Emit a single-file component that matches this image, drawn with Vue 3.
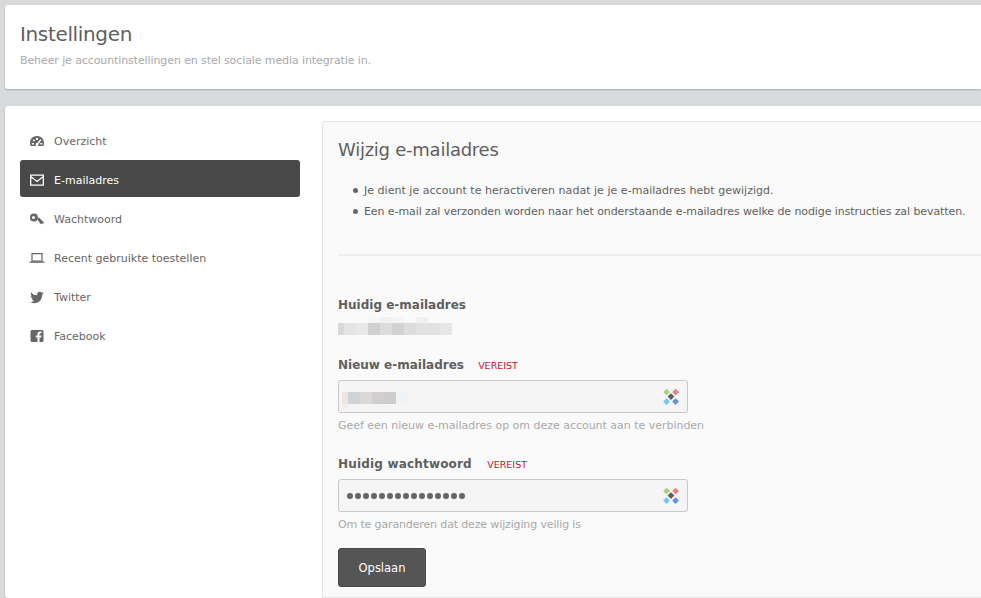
<template>
  <div class="page">
    <header class="card head">
      <h1>Instellingen</h1>
      <p>Beheer je accountinstellingen en stel sociale media integratie in.</p>
    </header>

    <section class="card body">
      <nav class="side">
        <a v-for="item in menu" :key="item.label" class="side-item" :class="{ active: item.active }">
          <svg class="side-icon" viewBox="0 0 16 16" width="16" height="16" v-html="item.icon"></svg>
          <span>{{ item.label }}</span>
        </a>
      </nav>

      <main class="panel">
        <h2>Wijzig e-mailadres</h2>
        <ul class="notes">
          <li>Je dient je account te heractiveren nadat je je e-mailadres hebt gewijzigd.</li>
          <li>Een e-mail zal verzonden worden naar het onderstaande e-mailadres welke de nodige instructies zal bevatten.</li>
        </ul>
        <hr />

        <div class="field first">
          <label>Huidig e-mailadres</label>
          <div class="pixels current">
            <div v-for="(row, r) in currentMail" :key="r" class="pixel-row" :class="{ thin: r === 0 }">
              <i v-for="(c, i) in row" :key="i" :style="{ background: c }"></i>
            </div>
          </div>
        </div>

        <div class="field">
          <label>Nieuw e-mailadres <em>VEREIST</em></label>
          <div class="input">
            <div class="pixels typed">
              <div v-for="(row, r) in newMail" :key="r" class="pixel-row" :class="{ thin: r === 1 }">
                <i v-for="(c, i) in row" :key="i" :style="{ background: c }"></i>
              </div>
            </div>
            <svg class="badge" viewBox="0 0 18 18" width="18" height="18">
              <path d="M4.600 .700l3.400 3.400-3.400 3.400-3.400-3.400z" fill="#a9d17f" />
              <path d="M13.600 .700l3.400 3.400-3.400 3.400-3.400-3.400z" fill="#e98181" />
              <path d="M4.600 10.200l3.400 3.400-3.400 3.400-3.400-3.400z" fill="#70c9ef" />
              <path d="M13.600 10.200l3.400 3.400-3.400 3.400-3.400-3.400z" fill="#6292d8" />
              <path d="M9 5.200l3.400 3.400-3.400 3.400-3.400-3.400z" fill="#5f5f5f" />
            </svg>
          </div>
          <small>Geef een nieuw e-mailadres op om deze account aan te verbinden</small>
        </div>

        <div class="field">
          <label class="wide">Huidig wachtwoord <em>VEREIST</em></label>
          <div class="input">
            <span class="dots">
              <b v-for="n in 15" :key="n"></b>
            </span>
            <svg class="badge" viewBox="0 0 18 18" width="18" height="18">
              <path d="M4.600 .700l3.400 3.400-3.400 3.400-3.400-3.400z" fill="#a9d17f" />
              <path d="M13.600 .700l3.400 3.400-3.400 3.400-3.400-3.400z" fill="#e98181" />
              <path d="M4.600 10.200l3.400 3.400-3.400 3.400-3.400-3.400z" fill="#70c9ef" />
              <path d="M13.600 10.200l3.400 3.400-3.400 3.400-3.400-3.400z" fill="#6292d8" />
              <path d="M9 5.200l3.400 3.400-3.400 3.400-3.400-3.400z" fill="#5f5f5f" />
            </svg>
          </div>
          <small class="tight">Om te garanderen dat deze wijziging veilig is</small>
        </div>

        <button class="save">Opslaan</button>
      </main>
    </section>
  </div>
</template>

<script setup>
const menu = [
  {
    label: 'Overzicht',
    icon: '<path fill="currentColor" fill-rule="evenodd" d="M8 3C3.800 3 1 6.200 1 10c0 1.200.3 2.200.7 3h12.600c.4-.8.7-1.800.7-3 0-3.800-2.800-7-7-7zM7 5h2v2H7zM3.700 7.200l1.400-1 1 1.300-1.400 1zM11.300 6.200l1.200.9-3 3.900a1.500 1.500 0 1 1-1.200-.9zM2.800 10h2v1.500h-2zM11.300 10h2v1.500h-2z"/>'
  },
  {
    label: 'E-mailadres',
    active: true,
    icon: '<path fill="none" stroke="currentColor" stroke-width="1.300" d="M1.700 3.200h12.600v10H1.700zM1.700 4.500L8 9.500l6.300-5"/>'
  },
  {
    label: 'Wachtwoord',
    icon: '<path fill="currentColor" fill-rule="evenodd" d="M5 2.500a4 4 0 1 1-.1 8 4 4 0 0 1 .1-8zM4.500 5a1.500 1.500 0 1 0 0 3 1.500 1.500 0 0 0 0-3zM8 8l2-1.500 5 5-1 1.500-1-.7-1 1-1-1-.7-1z"/>'
  },
  {
    label: 'Recent gebruikte toestellen',
    icon: '<path fill="none" stroke="currentColor" stroke-width="1.200" d="M3 3.600h10v7.600H3z"/><path fill="currentColor" d="M.5 11.500h15v1.300H.5z"/>'
  },
  {
    label: 'Twitter',
    icon: '<path fill="currentColor" d="M15 4c-.5.3-1 .4-1.600.5.600-.3 1-.8 1.200-1.500-.5.3-1.100.5-1.700.7a2.800 2.800 0 0 0-4.800 2.500C5.800 6.600 3.700 5.500 2.200 3.600c-.8 1.300-.4 3 .9 3.800-.5 0-.9-.1-1.300-.3 0 1.300 1 2.500 2.300 2.800-.4.100-.9.100-1.300 0 .4 1.100 1.400 1.900 2.600 1.900-1.100.9-2.600 1.300-4.100 1.100 4.800 3 11.900.6 11.900-7.300.6-.4 1.200-1 1.800-1.600z"/>'
  },
  {
    label: 'Facebook',
    icon: '<path fill="currentColor" d="M3 2h10a1.500 1.500 0 0 1 1.500 1.500v9A1.500 1.500 0 0 1 13 14h-2.500V9.500h1.700l.3-2h-2V6.300c0-.6.2-1 1-1h1.100V3.500h-1.500c-1.700 0-2.600 1-2.600 2.600v1.400H6.800v2h1.700V14H3a1.500 1.500 0 0 1-1.500-1.500v-9A1.500 1.500 0 0 1 3 2z"/>'
  }
]

// pixelated stand-ins for the hidden addresses, 6px cells
const f = '#fafafa'
const currentMail = [
  [f, f, f, f, f, '#f4f6f8', '#f4f6f8', '#f1f1f1', '#f1f1f1', '#f4f4f4', '#f4f4f4', f, f, '#f1f1f1', '#f1f1f1'],
  ['#d8d8d8', '#e4e4e4', '#e4e4e4', '#e8e8e8', '#e8e8e8', '#d0d0d2', '#d0d0d2', '#dcdcdc', '#dcdcdc', '#d2d2d2', '#d2d2d2', '#dcdcdc', '#dcdcdc', '#e2e2e2', '#e2e2e2', '#e2e2e2', '#e2e2e2', '#e6e6e6', '#e6e6e6']
]
const newMail = [
  ['#eee6e2', '#ced3d7', '#ced3d7', '#dad8d6', '#dad8d6', '#d0cece', '#d0cece', '#cecccc', '#cecccc', '#eff3f5', '#eff3f5'],
  ['#f3eeeb', '#f3f5f7', '#f3f5f7']
]
</script>

<style scoped>
.page {
  width: 981px;
  height: 598px;
  overflow: hidden;
  background: #d9dadc;
  padding: 5px 0 0 5px;
  box-sizing: border-box;
  font-family: "DejaVu Sans", sans-serif;
  color: #5f5f5f;
}
.card {
  background: #fff;
  border-radius: 3px 0 0 3px;
  box-shadow: 0 1px 2px rgba(0, 0, 0, 0.2);
}
.head {
  height: 84px;
  padding: 16px 15px 0;
  box-sizing: border-box;
}
h1 {
  margin: 0;
  font-size: 20px;
  font-weight: 400;
  line-height: 27px;
  letter-spacing: -0.35px;
}
.head p {
  margin: 5px 0 0;
  font-size: 11px;
  line-height: 16px;
  letter-spacing: -0.1px;
  color: #a9a9ad;
}
.body {
  margin-top: 17px;
  height: 492px;
  display: flex;
  padding: 15px 0 0 15px;
  box-sizing: border-box;
}
.side {
  width: 280px;
  flex: none;
  margin-right: 22px;
  display: flex;
  flex-direction: column;
  gap: 2px;
}
.side-item {
  display: flex;
  align-items: center;
  height: 37px;
  padding: 3px 0 0 9px;
  box-sizing: border-box;
  font-size: 11px;
  color: #666;
  border-radius: 3px;
}
.side-item.active {
  background: #484848;
  color: #fff;
}
.side-icon {
  flex: none;
  margin-right: 9px;
}
.panel {
  flex: 1;
  min-width: 0;
  background: #fafafa;
  border: 1px solid #e6e6e6;
  border-right: 0;
  border-radius: 3px 0 0 0;
  padding: 15px 0 0 15px;
  box-sizing: border-box;
}
h2 {
  margin: 0;
  font-size: 18px;
  font-weight: 400;
  line-height: 26px;
  letter-spacing: -0.25px;
}
.notes {
  list-style: none;
  margin: 17px 0 0;
  padding: 0 0 0 15px;
  font-size: 11px;
  line-height: 21px;
  white-space: nowrap;
}
.notes li {
  display: flex;
  align-items: center;
  letter-spacing: 0.03px;
}
.notes li:nth-child(2) {
  letter-spacing: -0.09px;
}
.notes li::before {
  content: '';
  flex: none;
  width: 5px;
  height: 5px;
  border-radius: 50%;
  background: #666;
  margin-right: 6px;
}
hr {
  border: 0;
  height: 2px;
  background: #efefef;
  margin: 32px 0 0;
}
.field {
  margin-top: 21px;
}
.field.first {
  margin-top: 40px;
}
label {
  display: block;
  font-size: 12px;
  font-weight: 700;
  line-height: 18px;
  color: #5f5f5f;
}
label.wide {
  letter-spacing: 0.18px;
}
em {
  font-style: normal;
  font-weight: 400;
  font-size: 9.5px;
  letter-spacing: 0;
  color: #c8102e;
  margin-left: 10px;
}
.wide em {
  margin-left: 11px;
}
.pixel-row {
  display: flex;
  height: 12px;
}
.pixel-row.thin {
  height: 6px;
}
.typed .pixel-row.thin {
  height: 4px;
}
.pixel-row i {
  display: block;
  width: 6px;
}
.pixels.current {
  margin-top: 3px;
}
.pixels.typed {
  margin-top: 7px;
}
.input {
  display: flex;
  align-items: center;
  justify-content: space-between;
  width: 350px;
  height: 33px;
  margin-top: 5px;
  padding: 0 7px 0 3px;
  box-sizing: border-box;
  background: #f5f5f5;
  border: 1px solid #c8c8c8;
  border-radius: 3px;
}
.dots {
  display: flex;
  gap: 2px;
  margin-top: 1px;
  padding-left: 5px;
}
.dots b {
  width: 6px;
  height: 6px;
  border-radius: 50%;
  background: #666;
}
small {
  display: block;
  margin-top: 5px;
  font-size: 11px;
  line-height: 16px;
  letter-spacing: -0.02px;
  color: #a9a9a9;
}
small.tight {
  letter-spacing: -0.14px;
}
.save {
  display: block;
  width: 88px;
  height: 39px;
  margin-top: 15px;
  background: #555;
  color: #fff;
  border: 1px solid #4a4a4a;
  border-radius: 3px;
  font-family: inherit;
  font-size: 11.5px;
}
</style>
